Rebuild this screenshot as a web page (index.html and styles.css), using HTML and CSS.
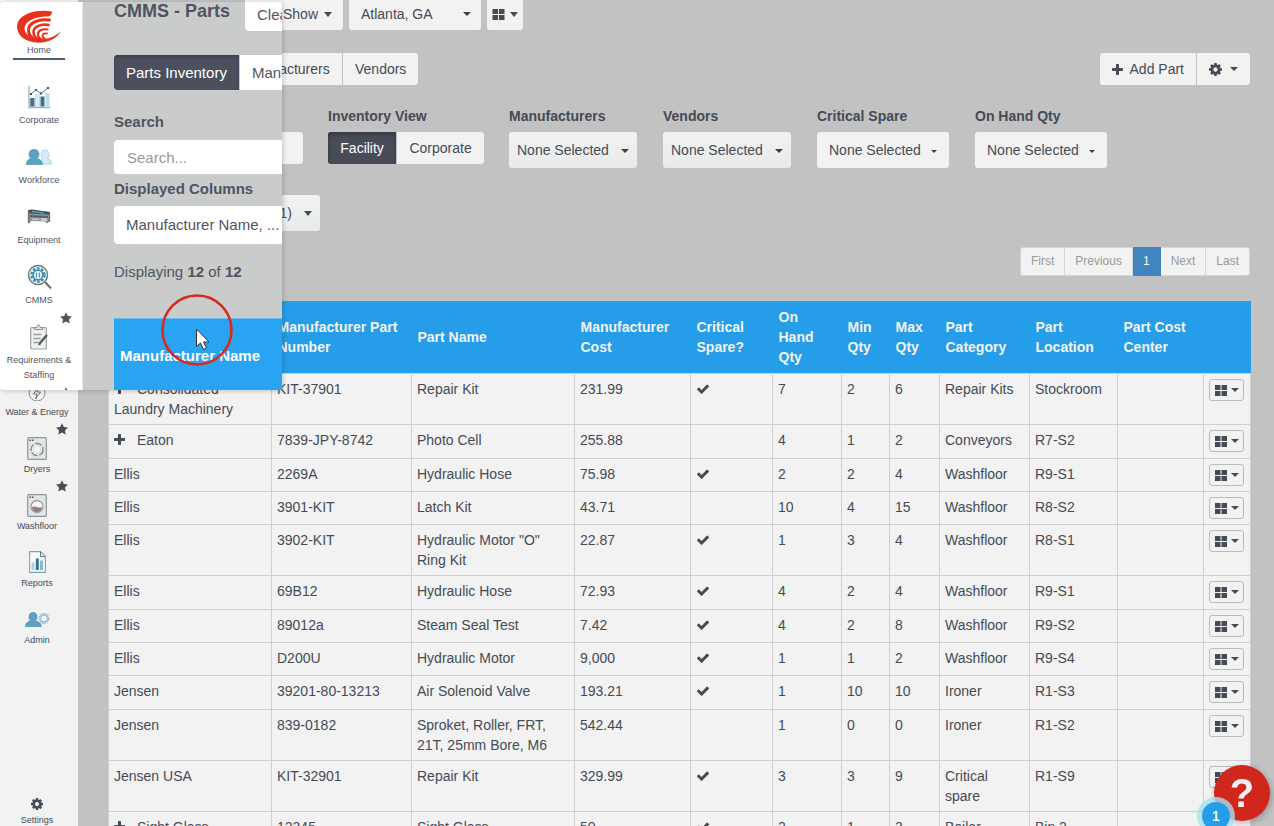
FILE: index.html
```html
<!DOCTYPE html>
<html lang="en">
<head>
<meta charset="utf-8">
<title>CMMS - Parts</title>
<link rel="stylesheet" href="styles.css">
</head>
<body>
<svg class="defs" aria-hidden="true">
  <symbol id="cog" viewBox="128 128 1536 1536"><path fill="currentColor" d="M1152 896q0-106-75-181t-181-75-181 75-75 181 75 181 181 75 181-75 75-181zm512-109v222q0 12-8 23t-20 13l-185 28q-19 54-39 91 35 50 107 138 10 12 10 25t-9 23q-27 37-99 108t-94 71q-12 0-26-9l-138-108q-44 23-91 38-16 136-29 186-7 28-36 28h-222q-14 0-24.5-8.5t-11.5-21.5l-28-184q-49-16-90-37l-141 107q-10 9-25 9-14 0-25-11-126-114-165-168-7-10-7-23 0-12 8-23 15-21 51-66.5t54-70.5q-27-50-41-99l-183-27q-13-2-21-12.5t-8-23.5v-222q0-12 8-23t19-13l186-28q14-46 39-92-40-57-107-138-10-12-10-24 0-10 9-23 26-36 98.5-107.5t94.5-71.5q13 0 26 10l138 107q44-23 91-38 16-136 29-186 7-28 36-28h222q14 0 24.5 8.5t11.5 21.5l28 184q49 16 90 37l142-107q9-9 24-9 13 0 25 10 129 119 165 170 7 8 7 22 0 12-8 23-15 21-51 66.5t-54 70.5q26 50 41 98l183 28q13 2 21 12.5t8 23.5z"/></symbol>
  <symbol id="check" viewBox="121 270 1550 1252"><path fill="currentColor" d="M1671 566q0 40-28 68l-724 724-136 136q-28 28-68 28t-68-28l-136-136-362-362q-28-28-28-68t28-68l136-136q28-28 68-28t68 28l294 295 656-657q28-28 68-28t68 28l136 136q28 28 28 68z"/></symbol>
  <symbol id="plus" viewBox="0 0 11 11"><path fill="currentColor" d="M4 .7Q4 0 4.700 0H6.300Q7 0 7 .7V4H10.300Q11 4 11 4.700V6.300Q11 7 10.300 7H7V10.300Q7 11 6.300 11H4.700Q4 11 4 10.300V7H.7Q0 7 0 6.300V4.700Q0 4 .7 4H4Z"/></symbol>
  <symbol id="grid" viewBox="0 0 12 11"><path fill="currentColor" d="M0 0h5.500v5H0zM6.500 0H12v5H6.500zM0 6h5.500v5H0zM6.500 6H12v5H6.500z"/></symbol>
  <symbol id="star" viewBox="0 0 12 12"><path fill="currentColor" d="M6 .2 7.800 4.100 12 4.600 8.900 7.400 9.700 11.600 6 9.500 2.300 11.600 3.100 7.400 0 4.600 4.200 4.100Z"/></symbol>
  <symbol id="washer" viewBox="0 0 20 23"><rect x=".7" y=".7" width="18.600" height="21.600" rx="1" fill="#e2e6e6" stroke="#8d9699" stroke-width="1.200"/><path d="M2.500 3.300h1.500M5 3.300h1.500" stroke="#4b5259" stroke-width="1.500"/></symbol>
</svg>

<div class="shell">
  <nav class="side" aria-label="Main">
    <a class="side-item" href="#"><span class="side-icon"><svg width="18" height="20" viewBox="0 0 18 20"><circle cx="9" cy="12" r="8" fill="none" stroke="#858c90"/><path d="M10.500 6 5.500 13H9L7.500 18 12.500 11H9Z" fill="none" stroke="#6d767b"/></svg></span>Water &amp; Energy</a>
    <a class="side-item" href="#"><svg class="side-star"><use href="#star"/></svg><span class="side-icon"><svg width="20" height="23" viewBox="0 0 20 23"><use href="#washer"/><circle cx="10" cy="12.500" r="6" fill="#f4f5f5" stroke="#8d8a8a" stroke-width="1.500" stroke-dasharray="7 1.500"/><circle cx="10" cy="12.500" r="4" fill="none" stroke="#d5d8d8"/></svg></span>Dryers</a>
    <a class="side-item" href="#"><svg class="side-star"><use href="#star"/></svg><span class="side-icon"><svg width="20" height="23" viewBox="0 0 20 23"><use href="#washer"/><circle cx="10" cy="12.500" r="6" fill="#f4f5f5" stroke="#a1a4a5" stroke-width="1.300"/><path d="M4.800 13Q7.500 11.800 10 13T15.200 13Q14.500 18 10 18T4.800 13Z" fill="#8b7f7f"/></svg></span>Washfloor</a>
    <a class="side-item" href="#"><span class="side-icon"><svg width="17" height="22" viewBox="0 0 17 22"><path d="M.6.6H11.500L16.400 5.500V21.400H.6Z" fill="#f7fafb" stroke="#7fa3b5" stroke-width="1.100"/><path d="M11.500.6V5.500H16.400" fill="none" stroke="#50798c"/><path d="M2.500 11.500h3V19h-3z" fill="#a8d2e4"/><path d="M6.800 7.500h3V19h-3z" fill="#3f6f8c"/><path d="M11 9.500h3V19h-3z" fill="#82bcd4"/></svg></span>Reports</a>
    <a class="side-item" href="#"><span class="side-icon"><svg width="25" height="15" viewBox="0 0 25 15"><path d="M8 .5Q12 .5 12 5 12 7.500 10.500 9 16 10 16.500 14.500H.2Q.5 10 5.500 9 4 7.500 4 5 4 .5 8 .5Z" fill="#5ba3c4" stroke="#3f86a8" stroke-width=".6"/><circle cx="19" cy="6.500" r="4.500" fill="none" stroke="#8abfd7" stroke-width="2" stroke-dasharray="1.600 .8"/><circle cx="19" cy="6.500" r="3.400" fill="#f2f6f7" stroke="#6baac6" stroke-width=".8"/></svg></span>Admin</a>
    <a class="side-item side-settings" href="#"><svg width="12" height="12"><use href="#cog"/></svg>Settings</a>
  </nav>

  <main class="main">
    <div class="topbar">
      <button class="btn btn-top btn-show" type="button">Show <i class="caret"></i></button>
      <div class="pick pick-site"><select class="select" aria-label="Site"><option>Atlanta, GA</option></select></div>
      <button class="btn btn-top btn-grid" type="button" aria-label="Layout"><svg width="13" height="11"><use href="#grid"/></svg><i class="caret"></i></button>
    </div>

    <div class="toolbar">
      <div class="group group-tabs">
        <button class="btn btn-mfr" type="button">Manufacturers</button>
        <button class="btn" type="button">Vendors</button>
      </div>
      <div class="group">
        <button class="btn btn-add" type="button"><svg width="11" height="11"><use href="#plus"/></svg>Add Part</button>
        <button class="btn btn-cog" type="button" aria-label="Options"><svg width="13" height="13"><use href="#cog"/></svg><i class="caret caret-sm"></i></button>
      </div>
    </div>

    <div class="filters">
      <div class="field field-search"><input class="input" type="text" aria-label="Search parts"></div>
      <div class="field"><span class="label">Inventory View</span>
        <div class="group group-view"><button class="btn btn-on" type="button">Facility</button><button class="btn" type="button">Corporate</button></div></div>
      <div class="field"><label class="label" for="f-m">Manufacturers</label><div class="pick pick-soft"><select class="select" id="f-m"><option>None Selected</option></select></div></div>
      <div class="field"><label class="label" for="f-v">Vendors</label><div class="pick pick-soft"><select class="select" id="f-v"><option>None Selected</option></select></div></div>
      <div class="field"><label class="label" for="f-c">Critical Spare</label><div class="pick pick-flat"><select class="select" id="f-c"><option>None Selected</option></select></div></div>
      <div class="field"><label class="label" for="f-q">On Hand Qty</label><div class="pick pick-flat"><select class="select" id="f-q"><option>None Selected</option></select></div></div>
    </div>

    <div class="columns">
      <button class="btn btn-columns" type="button">(11) <i class="caret"></i></button>
    </div>

    <nav class="pager" aria-label="Pages">
      <a href="#">First</a><a href="#">Previous</a><a class="pager-on" href="#">1</a><a href="#">Next</a><a href="#">Last</a>
    </nav>

    <table class="parts">
      <colgroup><col class="c-mfr"><col class="c-num"><col class="c-name"><col class="c-cost"><col class="c-crit"><col class="c-hand"><col class="c-min"><col class="c-max"><col class="c-cat"><col class="c-loc"><col class="c-center"><col class="c-act"></colgroup>
      <thead><tr><th></th><th>Manufacturer Part Number</th><th>Part Name</th><th>Manufacturer Cost</th><th>Critical Spare?</th><th>On Hand Qty</th><th>Min Qty</th><th>Max Qty</th><th>Part Category</th><th>Part Location</th><th>Part Cost Center</th><th></th></tr></thead>
      <tbody>
        <tr><td><svg class="expand"><use href="#plus"/></svg>Consolidated Laundry Machinery</td><td>KIT-37901</td><td>Repair Kit</td><td>231.99</td><td><svg class="tick"><use href="#check"/></svg></td><td>7</td><td>2</td><td>6</td><td>Repair Kits</td><td>Stockroom</td><td></td><td><button class="act" type="button" aria-label="Actions"><svg width="12" height="11"><use href="#grid"/></svg><i class="caret"></i></button></td></tr>
        <tr class="roomy"><td><svg class="expand"><use href="#plus"/></svg>Eaton</td><td>7839-JPY-8742</td><td>Photo Cell</td><td>255.88</td><td></td><td>4</td><td>1</td><td>2</td><td>Conveyors</td><td>R7-S2</td><td></td><td><button class="act" type="button" aria-label="Actions"><svg width="12" height="11"><use href="#grid"/></svg><i class="caret"></i></button></td></tr>
        <tr><td>Ellis</td><td>2269A</td><td>Hydraulic Hose</td><td>75.98</td><td><svg class="tick"><use href="#check"/></svg></td><td>2</td><td>2</td><td>4</td><td>Washfloor</td><td>R9-S1</td><td></td><td><button class="act" type="button" aria-label="Actions"><svg width="12" height="11"><use href="#grid"/></svg><i class="caret"></i></button></td></tr>
        <tr><td>Ellis</td><td>3901-KIT</td><td>Latch Kit</td><td>43.71</td><td></td><td>10</td><td>4</td><td>15</td><td>Washfloor</td><td>R8-S2</td><td></td><td><button class="act" type="button" aria-label="Actions"><svg width="12" height="11"><use href="#grid"/></svg><i class="caret"></i></button></td></tr>
        <tr><td>Ellis</td><td>3902-KIT</td><td>Hydraulic Motor "O" Ring Kit</td><td>22.87</td><td><svg class="tick"><use href="#check"/></svg></td><td>1</td><td>3</td><td>4</td><td>Washfloor</td><td>R8-S1</td><td></td><td><button class="act" type="button" aria-label="Actions"><svg width="12" height="11"><use href="#grid"/></svg><i class="caret"></i></button></td></tr>
        <tr class="roomy"><td>Ellis</td><td>69B12</td><td>Hydraulic Hose</td><td>72.93</td><td><svg class="tick"><use href="#check"/></svg></td><td>4</td><td>2</td><td>4</td><td>Washfloor</td><td>R9-S1</td><td></td><td><button class="act" type="button" aria-label="Actions"><svg width="12" height="11"><use href="#grid"/></svg><i class="caret"></i></button></td></tr>
        <tr><td>Ellis</td><td>89012a</td><td>Steam Seal Test</td><td>7.42</td><td><svg class="tick"><use href="#check"/></svg></td><td>4</td><td>2</td><td>8</td><td>Washfloor</td><td>R9-S2</td><td></td><td><button class="act" type="button" aria-label="Actions"><svg width="12" height="11"><use href="#grid"/></svg><i class="caret"></i></button></td></tr>
        <tr><td>Ellis</td><td>D200U</td><td>Hydraulic Motor</td><td>9,000</td><td><svg class="tick"><use href="#check"/></svg></td><td>1</td><td>1</td><td>2</td><td>Washfloor</td><td>R9-S4</td><td></td><td><button class="act" type="button" aria-label="Actions"><svg width="12" height="11"><use href="#grid"/></svg><i class="caret"></i></button></td></tr>
        <tr class="roomy"><td>Jensen</td><td>39201-80-13213</td><td>Air Solenoid Valve</td><td>193.21</td><td><svg class="tick"><use href="#check"/></svg></td><td>1</td><td>10</td><td>10</td><td>Ironer</td><td>R1-S3</td><td></td><td><button class="act" type="button" aria-label="Actions"><svg width="12" height="11"><use href="#grid"/></svg><i class="caret"></i></button></td></tr>
        <tr><td>Jensen</td><td>839-0182</td><td>Sproket, Roller, FRT, 21T, 25mm Bore, M6</td><td>542.44</td><td></td><td>1</td><td>0</td><td>0</td><td>Ironer</td><td>R1-S2</td><td></td><td><button class="act" type="button" aria-label="Actions"><svg width="12" height="11"><use href="#grid"/></svg><i class="caret"></i></button></td></tr>
        <tr><td>Jensen USA</td><td>KIT-32901</td><td>Repair Kit</td><td>329.99</td><td><svg class="tick"><use href="#check"/></svg></td><td>3</td><td>3</td><td>9</td><td>Critical spare</td><td>R1-S9</td><td></td><td><button class="act" type="button" aria-label="Actions"><svg width="12" height="11"><use href="#grid"/></svg><i class="caret"></i></button></td></tr>
        <tr><td><svg class="expand"><use href="#plus"/></svg>Sight Glass</td><td>12345</td><td>Sight Glass</td><td>50</td><td><svg class="tick"><use href="#check"/></svg></td><td>2</td><td>1</td><td>3</td><td>Boiler</td><td>Bin 2</td><td></td><td></td></tr>
      </tbody>
    </table>
  </main>
</div>

<section class="lens" aria-label="Magnified view">
  <nav class="lens-side">
    <a class="home" href="#"><svg width="46" height="34" viewBox="0 0 46 34"><path d="M36 1.500C24-1 9 2 3 10-2 18 3 28 13 31 24 35 39 32 45 21 40 26 34 28.500 28 29L20 29C12 27 7 22 9 16 12 9 22 6.500 32 6.500 34.500 6.500 36 4 36 1.500Z" fill="#e8321c"/><g fill="none" stroke="#e8321c" stroke-linecap="round"><path d="M33.500 10C22 8.500 12.500 13 12.500 20 12.500 25 16 28.500 21 30" stroke-width="3"/><path d="M32.500 15C24 13.500 17.500 17 17.500 22 17.500 26 20 29 25 30" stroke-width="2.600"/><path d="M31.500 19.500C25.500 18.500 22 21 22 24.500 22 27 24 29 28 30" stroke-width="2.200"/><path d="M31 23.500C28 23 26 24.500 26.500 26.500L29 29" stroke-width="1.800"/></g></svg><span>Home</span></a>
    <a class="lens-item" href="#"><span class="lens-icon"><svg width="23" height="23" viewBox="0 0 23 23"><path d="M1 0V21.500H22.500" fill="none" stroke="#9bb6c5" stroke-width="1.400"/><path d="M2.200 12h4.300v8.500H2.200z" fill="#456f8c"/><path d="M7.500 8.500h4v12h-4z" fill="#d5edf6" stroke="#a6cddd" stroke-width=".6"/><path d="M12.500 10.500h4v10h-4z" fill="#3d6f8f"/><path d="M17.500 7h4v13.500h-4z" fill="#b7e2ed"/><path d="m3 8 5-4 5 3.500L20 2" fill="none" stroke="#54758a"/><path d="M2 7h2v2H2zM7 3h2v2H7zM12 6.500h2v2h-2zM19 1h2v2h-2z" fill="#36566b"/></svg></span>Corporate</a>
    <a class="lens-item" href="#"><span class="lens-icon"><svg width="26" height="16" viewBox="0 0 26 16"><path d="M19 1Q23 1 23 5.500 23 8 21.500 9.500 25.500 10.500 25.800 15H14Q14 10.500 16.500 9.500 15 8 15 5.500 15 1 19 1Z" fill="#d2edf5" stroke="#9fcbdc" stroke-width=".7"/><path d="M8 .5Q13 .5 13 5.500 13 8 11 9.500 16 10.500 16.500 15.500H.2Q.5 10.500 5 9.500 3 8 3 5.500 3 .5 8 .5Z" fill="#59a2c2" stroke="#4689aa" stroke-width=".6"/></svg></span>Workforce</a>
    <a class="lens-item" href="#"><span class="lens-icon"><svg width="24" height="16" viewBox="0 0 24 16"><path d="M1 1 23 3V12L20 14.500 18 12.500 4 12 3 14.500 1 13Z" fill="#8d9498"/><path d="M1 1 5 .5 23 3 22 5.500 3 4.500Z" fill="#474e54"/><path d="m3 6 18 1v2L3 8Z" fill="#55616a"/><path d="M5 2.500 17 4" stroke="#4f9dbf" stroke-width="1.300"/><path d="M1.500 2v12M22.500 4v9" stroke="#666e73" stroke-width="1.300"/><path d="M14 9h6v3h-6zM5 9.500h7v1.500H5z" fill="#c3c8ca"/></svg></span>Equipment</a>
    <a class="lens-item" href="#"><span class="lens-icon"><svg width="25" height="26" viewBox="0 0 25 26"><circle cx="11" cy="11" r="9.500" fill="#f4fafc" stroke="#717b82" stroke-width="1.500"/><circle cx="11" cy="11" r="6.500" fill="none" stroke="#3f8db2" stroke-width="2.500" stroke-dasharray="2.700 1.400"/><circle cx="11" cy="11" r="4.800" fill="none" stroke="#3f8db2" stroke-width="1.600"/><path d="M9.500 8.500v5M12.500 8.500v5" stroke="#4c95b8" stroke-width="1.300"/><path d="m18 18 6 6.500" stroke="#687178" stroke-width="2"/></svg></span>CMMS</a>
    <a class="lens-item" href="#"><svg class="lens-star"><use href="#star"/></svg><span class="lens-icon"><svg width="18" height="26" viewBox="0 0 18 26"><rect x=".7" y="3.700" width="15.600" height="21.300" rx="1" fill="#eef0f0" stroke="#9da3a5" stroke-width="1.200"/><path d="M4.500 5.500V3.500H7Q7 .7 8.500.7T10 3.500h2.500v2Z" fill="#e4e6e7" stroke="#8e9496"/><path d="M3.500 10.500h8M3.500 14.500h7M3.500 18.500h5" stroke="#9ba0a2" stroke-width="1.300"/><path d="M17 11 10.500 18.500 9 21" fill="none" stroke="#555b5f" stroke-width="2.400"/></svg></span>Requirements &amp; Staffing</a>
    <span class="lens-item"><svg class="lens-star"><use href="#star"/></svg></span>
  </nav>
  <div class="lens-main">
    <div class="lens-top"><h1 class="lens-title">CMMS - Parts</h1><button class="lens-btn lens-clear" type="button">Clear</button></div>
    <div class="lens-tabs"><button class="lens-btn lens-on" type="button">Parts Inventory</button><button class="lens-btn" type="button">Manufacturers</button></div>
    <label class="lens-label" for="l-s">Search</label>
    <input class="lens-input" id="l-s" type="text" placeholder="Search...">
    <label class="lens-label lens-label-tight" for="l-c">Displayed Columns</label>
    <select class="lens-select" id="l-c"><option>Manufacturer Name, ...</option></select>
    <p class="lens-count">Displaying <b>12</b> of <b>12</b></p>
    <div class="lens-head">Manufacturer Name</div>
  </div>
  <svg class="pointer" viewBox="0 0 72 74"><circle cx="36" cy="37" r="34.500" fill="none" stroke="#d9281c" stroke-width="2.600"/><path d="M35.500 36V53.500L39.500 50L42.500 56.500L45.500 55L42.500 49H48Z" fill="#fff" stroke="#333" stroke-width="1"/></svg>
</section>

<span class="badge">1</span>
<button class="help" type="button">?</button>
</body>
</html>
```

FILE: styles.css
```css
* { box-sizing: border-box; }
body {
  margin: 0;
  background: #c2c2c2;
  color: #454b55;
  font: 14px/20px "Liberation Sans", Arial, sans-serif;
}
button, input, select { font: inherit; color: inherit; }
a { color: inherit; text-decoration: none; }
.defs { position: absolute; width: 0; height: 0; }

.shell { display: flex; height: 100vh; overflow: hidden; }

/* Side navigation */
.side {
  flex: none;
  display: flex;
  flex-direction: column;
  width: 78px;
  padding-top: 376px;
  background: #f2f2f2;
}
.side-item {
  position: relative;
  display: flex;
  flex-direction: column;
  align-items: center;
  gap: 3px;
  height: 57px;
  padding: 3px 4px 0 0;
  font-size: 9px;
  line-height: 12px;
  white-space: nowrap;
}
.side-icon { display: flex; align-items: center; height: 24px; }
.side-star { position: absolute; top: -10px; left: 56px; width: 12px; height: 12px; }
.side-settings { height: auto; margin-top: auto; gap: 4px; }

/* Shared controls */
.caret {
  display: inline-block;
  border: 4px solid transparent;
  border-top: 5px solid currentColor;
  border-bottom: 0;
}
.caret-sm { border-width: 4px 4px 0; }
.btn {
  display: flex;
  align-items: center;
  justify-content: center;
  height: 32px;
  padding: 0 12px;
  border: 0;
  border-radius: 3px;
  background: #f2f2f2;
  white-space: nowrap;
}
.btn-on { background: #484c58; color: #fff; box-shadow: inset 0 2px 4px #33363f; }
.group { display: flex; gap: 1px; }
.group .btn:first-child { border-radius: 3px 0 0 3px; }
.group .btn:last-child { border-radius: 0 3px 3px 0; }
.group-view { width: 156px; }
.group-view .btn { flex: auto; }
.pick { position: relative; height: 36px; border-radius: 3px; background: #f2f2f2; }
.pick::after {
  content: "";
  position: absolute;
  top: 17px;
  right: 8px;
  border: 4px solid transparent;
  border-top-color: #3b3f48;
  border-bottom: 0;
  pointer-events: none;
}
.select {
  appearance: none;
  width: 100%;
  height: 100%;
  padding: 0 8px;
  border: 0;
  background: none;
}
.pick-soft { width: 128px; background: linear-gradient(#f2f2f2, #e8eaea); }
.pick-flat { width: 132px; }
.pick-flat::after { right: 12px; border-width: 3px 3px 0; top: 18px; }
.pick-flat .select { padding: 0 12px; }

/* Main area */
.main { flex: 1; min-width: 0; padding: 0 24px 0 30px; }
.topbar { display: flex; gap: 6px; height: 30px; padding-left: 137px; }
.btn-top { height: 30px; gap: 6px; padding: 0 11px 2px; border-radius: 0 0 3px 3px; }
.btn-show { width: 98px; justify-content: flex-end; }
.btn-grid { width: 36px; padding: 0 4px 2px; gap: 5px; }
.pick-site { width: 132px; height: 30px; border-radius: 0 0 3px 3px; }
.pick-site::after { top: 12px; right: 10px; }
.pick-site .select { padding: 0 12px 2px; }

.toolbar { display: flex; justify-content: space-between; margin-top: 23px; }
.group-tabs { padding-left: 120px; }
.btn-mfr { width: 114px; }
.btn-add { gap: 7px; }
.btn-cog { gap: 8px; }

.filters { display: flex; align-items: flex-start; gap: 25px; margin-top: 21px; }
.field:nth-child(n+3) { margin-right: 1px; }
.label { display: block; margin-bottom: 6px; font-weight: bold; }
.field-search { width: 195px; padding-top: 26px; }
.input { display: block; width: 100%; height: 32px; border: 0; border-radius: 3px; background: #f2f2f2; }

.columns { margin-top: 27px; }
.btn-columns { width: 212px; height: 36px; gap: 12px; padding: 0 8px; justify-content: flex-end; background: linear-gradient(#f2f2f2, #e8eaea); }

.pager { display: flex; justify-content: flex-end; margin-top: 16px; font-size: 12px; line-height: 18px; color: #999; }
.pager a { padding: 4px 10px 5px; border: 1px solid #d4d4d4; border-left: 0; background: #f2f2f2; }
.pager a:first-child { border-left: 1px solid #d4d4d4; border-radius: 3px 0 0 3px; }
.pager a:last-child { border-radius: 0 3px 3px 0; }
.pager .pager-on { border-color: #4085c0; background: #4085c0; color: #f2f2f2; }

/* Parts table */
.parts { width: 100%; margin-top: 25px; border-collapse: collapse; table-layout: fixed; background: #f2f2f2; }
.c-mfr, .c-name { width: 163px; }
.c-num { width: 140px; }
.c-cost { width: 116px; }
.c-crit { width: 82px; }
.c-hand { width: 69px; }
.c-min { width: 48px; }
.c-max { width: 50px; }
.c-cat { width: 90px; }
.c-loc { width: 88px; }
.c-center { width: 86px; }
.c-act { width: 47px; }
.parts th {
  height: 72px;
  padding: 6px;
  background: #269de8;
  color: #f2f2f2;
  text-align: left;
  vertical-align: middle;
}
.parts td { height: 33px; padding: 5px; border: 1px solid #cfcfcf; vertical-align: top; }
.parts .roomy td { height: 34px; }
.expand { width: 11px; height: 11px; margin-right: 12px; }
.tick { width: 12px; height: 10px; margin-left: 1px; }
.act {
  display: flex;
  align-items: center;
  justify-content: center;
  gap: 4px;
  width: 35px;
  height: 22px;
  padding: 0;
  border: 1px solid #bbb;
  border-radius: 3px;
  background: #f2f2f2;
}
.act .caret { border-width: 4px 4px 0; }

/* Magnified area */
.lens {
  position: absolute;
  top: 2px;
  left: 0;
  display: flex;
  width: 282px;
  height: 388px;
  overflow: hidden;
  border-radius: 3px;
  background: #cacccb;
  box-shadow: 1px 1px 5px #0003;
  color: #505462;
  font-size: 15px;
}
.lens-side { flex: none; width: 83px; border-right: 1px solid #e4e6e6; background: #fff; font-size: 9px; line-height: 15px; }
.home {
  display: flex;
  flex-direction: column;
  align-items: center;
  height: 58px;
  margin: 0 17px 24px 13px;
  padding-top: 8px;
  border-bottom: 2px solid #555968;
  line-height: 12px;
}
.lens-item {
  position: relative;
  display: flex;
  flex-direction: column;
  align-items: center;
  gap: 3px;
  padding: 0 4px 16px 0;
  text-align: center;
}
.lens-icon { display: flex; align-items: center; height: 26px; }
.lens-star { position: absolute; top: -12px; left: 60px; width: 12px; height: 12px; }
.lens-main { flex: none; width: 240px; padding-left: 31px; }
.lens-top { display: flex; justify-content: space-between; height: 29px; }
.lens-title { margin: 0; font-size: 18px; line-height: 18px; }
.lens-btn { height: 35px; padding: 0 12px; border: 0; background: #fff; white-space: nowrap; }
.lens-clear { width: 78px; height: 29px; padding-bottom: 3px; border-radius: 0 0 0 4px; text-align: left; }
.lens-tabs { display: flex; gap: 1px; margin: 24px 0 22px; }
.lens-on { border-radius: 4px 0 0 4px; background: #4c4f5e; color: #fff; box-shadow: inset 0 2px 3px #3d404d; }
.lens-label { display: block; margin-bottom: 8px; font-weight: bold; }
.lens-label-tight { margin: 5px 0 7px; }
.lens-input, .lens-select {
  display: block;
  appearance: none;
  width: 100%;
  height: 34px;
  padding: 0 13px;
  border: 0;
  border-radius: 4px;
  background: #fff;
}
.lens-input::placeholder { color: #999; }
.lens-select { height: 38px; padding: 0 12px; }
.lens-count { margin: 18px 0 36px; }
.lens-head { height: 72px; padding: 27px 6px; border-top: 1px solid #6bbcec; background: #29a4f2; color: #fff; font-weight: bold; }
.pointer { position: absolute; top: 291px; left: 161px; width: 72px; height: 74px; }

/* Help */
.help {
  position: fixed;
  right: 4px;
  bottom: 5px;
  width: 56px;
  height: 56px;
  padding: 0;
  border: 0;
  border-radius: 50%;
  background: #d1261c;
  box-shadow: 1px 2px 6px #0004;
  color: #f2f2f2;
  font-size: 40px;
  font-weight: bold;
  line-height: 56px;
}
.badge {
  position: fixed;
  right: 44px;
  bottom: -4px;
  z-index: 1;
  width: 28px;
  height: 28px;
  border-radius: 50%;
  background: #269de8;
  box-shadow: 0 0 0 5px #a9e0eecc;
  color: #f2f2f2;
  font-weight: bold;
  line-height: 28px;
  text-align: center;
}
```
